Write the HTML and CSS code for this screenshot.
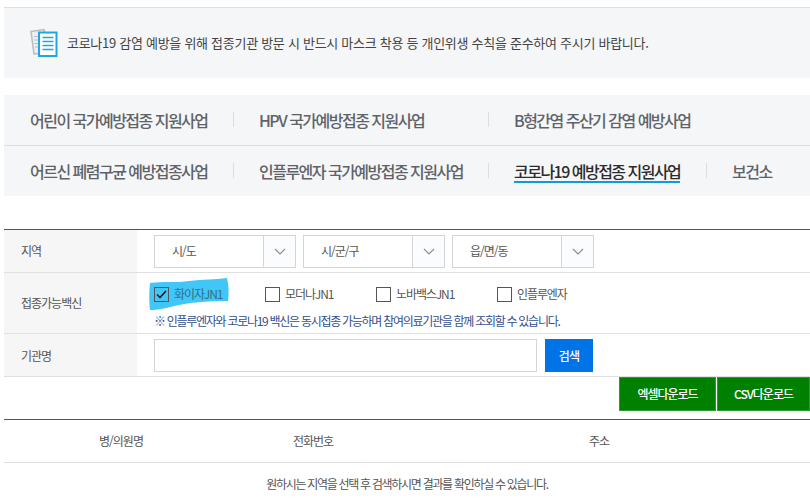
FILE: index.html
```html
<!DOCTYPE html>
<html lang="ko">
<head>
<meta charset="utf-8">
<title>코로나19 예방접종 지원사업</title>
<link rel="stylesheet" href="styles.css">
</head>
<body>
<main class="page">
  <section class="notice">
    <svg class="notice-icon" width="31" height="30" viewBox="0 0 31 30">
      <path d="M2 3.500 L15 1.500 L16 6 L10.500 6 L10.500 25.500 L5 26 Z" fill="#eceef0" stroke="#b9bcc2" stroke-width="1.500"/>
      <path d="M5 8.500h5M5.500 12h5M5.500 15.500h5M6 19h4" stroke="#b9bcc2" stroke-width="1.200"/>
      <rect x="10" y="4.500" width="17.500" height="23.500" fill="#fff" stroke="#1ea7e4" stroke-width="2"/>
      <path d="M13.500 9.500h11M13.500 13.500h11M13.500 17.500h11M13.500 21.500h11" stroke="#1ea7e4" stroke-width="1.600"/>
    </svg>
    <p class="notice-text">코로나19 감염 예방을 위해 접종기관 방문 시 반드시 마스크 착용 등 개인위생 수칙을 준수하여 주시기 바랍니다.</p>
  </section>

  <nav class="tabs">
    <a class="tab">어린이 국가예방접종 지원사업</a>
    <a class="tab tab-sep">HPV 국가예방접종 지원사업</a>
    <a class="tab tab-sep">B형간염 주산기 감염 예방사업</a>
    <span class="tab-empty"></span>
    <a class="tab tab-line">어르신 폐렴구균 예방접종사업</a>
    <a class="tab tab-sep tab-line">인플루엔자 국가예방접종 지원사업</a>
    <a class="tab tab-sep tab-line"><span class="tab-active">코로나19 예방접종 지원사업</span></a>
    <a class="tab tab-sep tab-line">보건소</a>
  </nav>

  <section class="search">
    <div class="row row-region">
      <div class="label label-up">지역</div>
      <div class="field selects">
        <div class="select"><span class="select-value">시/도</span><span class="select-arrow"><svg width="12" height="7" viewBox="0 0 12 7"><path d="M1 1l5 5 5-5" fill="none" stroke="#8b9096" stroke-width="1.200"/></svg></span></div>
        <div class="select"><span class="select-value">시/군/구</span><span class="select-arrow"><svg width="12" height="7" viewBox="0 0 12 7"><path d="M1 1l5 5 5-5" fill="none" stroke="#8b9096" stroke-width="1.200"/></svg></span></div>
        <div class="select"><span class="select-value">읍/면/동</span><span class="select-arrow"><svg width="12" height="7" viewBox="0 0 12 7"><path d="M1 1l5 5 5-5" fill="none" stroke="#8b9096" stroke-width="1.200"/></svg></span></div>
      </div>
    </div>
    <div class="row row-vaccine">
      <div class="label label-up">접종가능백신</div>
      <div class="field vaccine">
        <svg class="marker" width="80" height="33" viewBox="0 0 80 33"><path d="M1 5 C14 3 28 5 40 3 C54 1 66 2 78 0 C80 8 80 16 79 23 C60 23 45 24 30 27 C18 30 8 32 1 32 C0 24 0 14 1 5 Z" fill="#41c6f8"/></svg>
        <div class="checks">
          <label class="check check-1"><span class="box box-on"><svg width="11" height="9" viewBox="0 0 11 9"><path d="M1 4.500l3 3 6-6.500" fill="none" stroke="#111" stroke-width="1.500"/></svg></span><span class="check-text">화이자JN1</span></label>
          <label class="check check-2"><span class="box"></span><span class="check-text">모더나JN1</span></label>
          <label class="check check-3"><span class="box"></span><span class="check-text">노바백스JN1</span></label>
          <label class="check"><span class="box"></span><span class="check-text">인플루엔자</span></label>
        </div>
        <p class="hint">※ 인플루엔자와 코로나19 백신은 동시접종 가능하며 참여의료기관을 함께 조회할 수 있습니다.</p>
      </div>
    </div>
    <div class="row row-name">
      <div class="label">기관명</div>
      <div class="field name-field">
        <div class="name-input"></div>
        <button class="search-btn">검색</button>
      </div>
    </div>
  </section>

  <div class="downloads">
    <button class="dl-btn dl-excel">엑셀다운로드</button>
    <button class="dl-btn dl-csv">CSV다운로드</button>
  </div>

  <section class="results">
    <div class="results-head">
      <span>병/의원명</span>
      <span>전화번호</span>
      <span>주소</span>
    </div>
    <p class="results-empty">원하시는 지역을 선택 후 검색하시면 결과를 확인하실 수 있습니다.</p>
  </section>
</main>
</body>
</html>
```

FILE: styles.css
```css
* { box-sizing: border-box; }
html, body { margin: 0; padding: 0; background: #fff; }
body {
  font-family: "Noto Sans CJK KR", "Noto Sans", sans-serif;
  font-size: 12px;
  color: #555;
  overflow: hidden;
}
p { margin: 0; }
.page { width: 810px; height: 501px; padding: 7px 0 0 4px; }

.notice {
  height: 71px;
  border-top: 1px solid #dedfe1;
  background: #f5f6f8;
  display: flex;
  align-items: center;
  padding: 0 0 0 25px;
}
.notice-icon { flex: none; margin-right: 7px; }
.notice-text { font-size: 13px; letter-spacing: -0.28px; color: #444; line-height: 20px; white-space: nowrap; }

.tabs {
  margin-top: 17px;
  height: 101px;
  background: #f5f6f8;
  display: grid;
  grid-template-columns: 229px 255px 218px 1fr;
  grid-template-rows: 50px 51px;
}
.tab {
  position: relative;
  display: flex;
  align-items: center;
  padding-left: 26px;
  font-size: 16px;
  font-weight: 500;
  letter-spacing: -1.52px;
  color: #5f6368;
  white-space: nowrap;
}
.tab-line { border-top: 1px solid #dddfe2; }
.tab-empty { display: block; }
.tab-sep::before {
  content: "";
  position: absolute;
  left: 0;
  top: 17px;
  height: 15px;
  width: 1px;
  background: #dcdee1;
}
.tab-active {
  color: #2b2b2b;
  border-bottom: 2px solid #0f9ae0;
  line-height: 19px;
  margin-top: 3px;
}

.search { margin-top: 33px; border-top: 1px solid #555; }
.row { display: flex; border-bottom: 1px solid #dfe0e2; }
.row-region { height: 43px; }
.row-vaccine { height: 61px; }
.row-name { height: 43px; }
.label {
  flex: none;
  width: 133px;
  background: #f6f6f6;
  padding-left: 17px;
  display: flex;
  align-items: center;
  font-size: 12px;
  letter-spacing: -1px;
  color: #555;
}
.label-up { padding-bottom: 2px; }
.field { flex: 1; padding-left: 17px; }

.selects { display: flex; gap: 7px; padding-top: 5px; }
.select {
  width: 142px;
  height: 33px;
  border: 1px solid #d2d5da;
  display: flex;
  background: #fff;
}
.select-value { flex: 1; padding-left: 17px; font-size: 12px; letter-spacing: -1px; line-height: 29px; color: #555; }
.select-arrow {
  flex: none;
  width: 32px;
  border-left: 1px solid #d2d5da;
  background: #fbfcfd;
  display: flex;
  align-items: center;
  justify-content: center;
}

.vaccine { position: relative; padding-top: 11px; }
.marker { position: absolute; left: 12px; top: 5px; }
.checks { position: relative; display: flex; align-items: center; height: 21px; }
.check { display: flex; align-items: center; }
.check-1 { width: 111px; }
.check-2 { width: 111px; }
.check-3 { width: 121px; }
.box {
  width: 15px;
  height: 15px;
  border: 1px solid #555;
  background: #fff;
  display: flex;
  align-items: center;
  justify-content: center;
  margin-right: 5px;
  flex: none;
}
.box-on { background: transparent; }
.check-text { font-size: 12px; letter-spacing: -1.1px; line-height: 14px; margin-top: -2px; color: #555; }
.check-1 .check-text { color: #2f7286; }
.hint { font-size: 12px; letter-spacing: -1.28px; color: #31508f; margin-top: 8px; line-height: 16px; white-space: nowrap; }

.name-field { display: flex; gap: 8px; padding-top: 5px; }
.name-input { width: 383px; height: 33px; border: 1px solid #d2d5da; background: #fff; }
.search-btn {
  width: 48px;
  height: 33px;
  border: 0;
  padding: 0;
  background: #0073e6;
  color: #fff;
  font: 500 12px "Noto Sans CJK KR", sans-serif;
  letter-spacing: -0.8px;
}

.downloads { display: flex; justify-content: flex-end; gap: 1px; height: 34px; }
.dl-btn {
  height: 34px;
  border: 1px solid #2f9a2f;
  padding: 0 0 2px;
  background: #008000;
  color: #fff;
  font: 500 12px "Noto Sans CJK KR", sans-serif;
  letter-spacing: -1px;
}
.dl-excel { width: 97px; }
.dl-csv { width: 93px; }

.results { margin-top: 8px; border-top: 1px solid #555; }
.results-head {
  height: 43px;
  border-bottom: 1px solid #dfe0e2;
  display: grid;
  grid-template-columns: 234px 150px 1fr;
  align-items: center;
  text-align: center;
  font-size: 12px;
  letter-spacing: -1px;
  padding-bottom: 2px;
}
.results-empty { text-align: center; font-size: 12px; letter-spacing: -1.3px; line-height: 42px; color: #555; }
```
